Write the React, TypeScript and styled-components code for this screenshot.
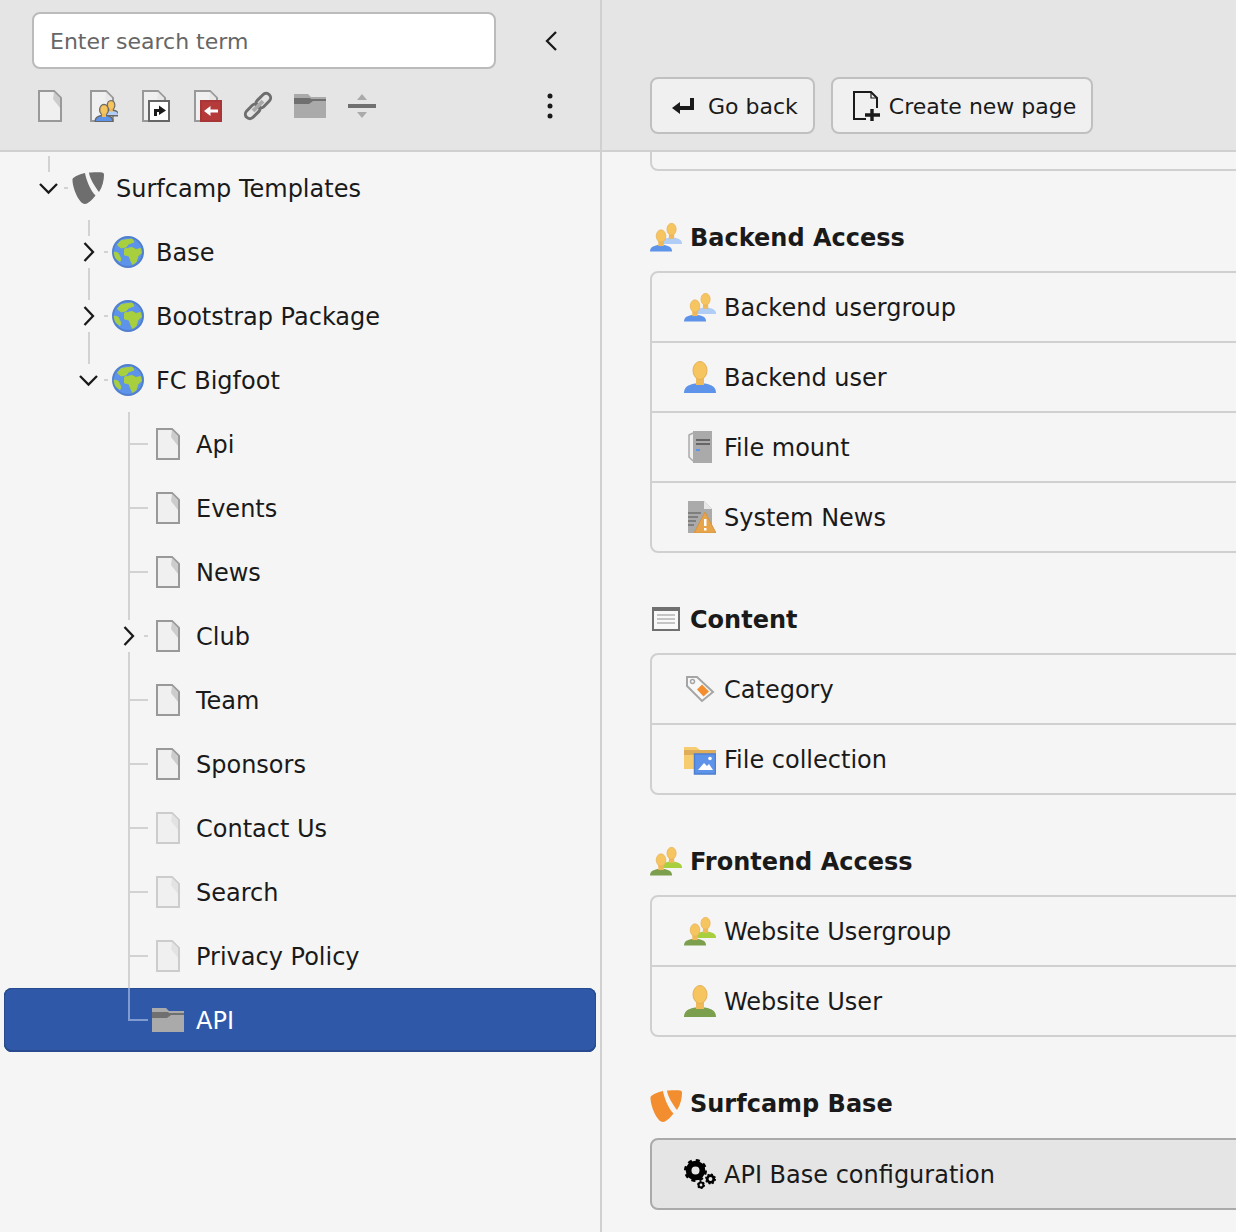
import React from 'react';
import styled, { createGlobalStyle } from 'styled-components';

const GlobalStyle = createGlobalStyle`
  html, body {
    margin: 0;
    padding: 0;
    height: 100%;
    overflow: hidden;
    background: #f5f5f5;
  }
  * { box-sizing: border-box; }
  body {
    font-family: "DejaVu Sans", Verdana, sans-serif;
    color: #1a1a1a;
  }
`;

const Glyph = styled.svg`
  display: block;
  flex: none;
  width: 32px;
  height: 32px;
`;

const Chevron = ({ dir }: { dir: 'left' | 'right' | 'down' }) => {
  const d = { left: 'M14 1 L5 10 L14 19', right: 'M5.500 1 L14 10 L5.500 19', down: 'M1 6 L9.500 14.500 L18 6' }[dir];
  return (
    <svg width="20" height="20" viewBox="0 0 20 20" fill="none" stroke="#1a1a1a" strokeWidth="2.300">
      <path d={d} />
    </svg>
  );
};

const Logo = ({ color }: { color: string }) => (
  <Glyph viewBox="0 0 32 32" fill={color}>
    <path d="M0.500 7 C2 4.500 8 2 13 1 C14 7 18 18 23.500 23.500 C20.500 27.500 16 32 13 32 C7 32 0 15 0.500 7Z" />
    <path d="M17 0.500 C22 0.500 27 0 30 0.500 C31.500 0.800 32 1.500 32 3 C32 8 30.500 15 27 20 C23 15 17.500 6 17 0.500Z" />
  </Glyph>
);

const Globe = () => (
  <Glyph viewBox="0 0 32 32">
    <circle cx="16" cy="16" r="15" fill="#5e93ea" stroke="#4f7fce" strokeWidth="2" />
    <path
      fill="#a8cf3d"
      stroke="#a8cf3d"
      strokeLinejoin="round"
      d="M9 4.500 L20 3 L22 6 L16.500 8 L14 11 L9 12 L5.500 9Z M12.500 13 L20 11.500 L24 13.500 L28.500 12.500 L29.500 17 L26 20 L24 26 L20.500 28.500 L18.500 24 L17 20 L12.500 19Z M2 16 L6 17 L9 23 L8 25.500 L3.500 22Z"
    />
  </Glyph>
);

type PersonProps = { body: string; x?: number; y?: number; scale?: number; outline?: boolean };

const Person = ({ body, x = 0, y = 0, scale = 1, outline }: PersonProps) => (
  <g transform={`translate(${x} ${y}) scale(${scale})`}>
    {outline && (
      <g fill="#666" stroke="#666" strokeWidth="6">
        <path d="M0 32 C0 26 4 24 11 22.500 L21 22.500 C28 24 32 26 32 32Z" />
        <ellipse cx="16" cy="9.500" rx="7" ry="9" />
      </g>
    )}
    <path fill={body} d="M0 32 C0 26 4 24 11 22.500 L21 22.500 C28 24 32 26 32 32Z" />
    <rect x="12" y="15" width="8" height="9" fill="#f0b95a" />
    <ellipse cx="16" cy="9.500" rx="7" ry="9" fill="#f6c55f" stroke="#e3b056" />
  </g>
);

const User = ({ body }: { body: string }) => (
  <Glyph viewBox="0 0 32 32">
    <Person body={body} />
  </Glyph>
);

const Users = ({ front, back }: { front: string; back: string }) => (
  <Glyph viewBox="0 0 32 32">
    <Person body={back} x={11} y={2} scale={0.66} />
    <Person body={front} x={0} y={8.500} scale={0.69} />
  </Glyph>
);

const PageOutline = ({ stroke = '#999', fold = '#ccc' }: { stroke?: string; fold?: string }) => (
  <>
    <path d="M5 1 H20 L27 8 V31 H5Z" fill="#f0f0f0" stroke={stroke} strokeWidth="2" />
    <path d="M20 2 L26 8 V18 L19 9Z" fill={fold} />
  </>
);

const Page = ({ hidden }: { hidden?: boolean }) => (
  <Glyph viewBox="0 0 32 32">
    <PageOutline stroke={hidden ? '#ccc' : '#999'} fold={hidden ? '#e3e3e3' : '#ccc'} />
  </Glyph>
);

const Folder = () => (
  <Glyph viewBox="0 0 32 32">
    <path d="M0 4 H14 L17 7 H32 V28 H0Z" fill="#aaa" />
    <path d="M0 8 H16 L17 9 H32 V11 H19 L15 14 H0Z" fill="#707070" />
  </Glyph>
);

const PageUsersIcon = () => (
  <Glyph viewBox="0 0 32 32">
    <PageOutline fold="#e8e8e8" />
    <Person body="#b0cdf5" x={18} y={11} scale={0.44} outline />
    <Person body="#5e93ea" x={10} y={15} scale={0.5} outline />
  </Glyph>
);

const PageShortcutIcon = () => (
  <Glyph viewBox="0 0 32 32">
    <PageOutline fold="#e8e8e8" />
    <rect x="11" y="11" width="20" height="20" fill="#fff" stroke="#666" strokeWidth="2" />
    <path d="M16 26 V19 H21 V15.500 L28 20.500 L21 25 V22 H19 V26Z" fill="#1a1a1a" />
  </Glyph>
);

const PageReturnIcon = () => (
  <Glyph viewBox="0 0 32 32">
    <PageOutline fold="#e8e8e8" />
    <rect x="11" y="11" width="20" height="20" fill="#b53b3b" stroke="#a83636" strokeWidth="2" />
    <path d="M14 21 L20.500 16 V19.500 L28 19.500 V22.500 H20.500 V26Z" fill="#fff" />
  </Glyph>
);

const ChainIcon = () => (
  <Glyph viewBox="0 0 32 32">
    <g transform="rotate(-45 16 16)">
      <g fill="none" stroke="#6e6e6e" strokeWidth="3">
        <rect x="0" y="11.500" width="17" height="9" rx="4.500" />
        <rect x="15" y="11.500" width="17" height="9" rx="4.500" />
      </g>
      <rect x="9" y="14" width="14" height="4" fill="#aaa" />
    </g>
  </Glyph>
);

const DividerIcon = () => (
  <Glyph viewBox="0 0 32 32">
    <rect x="2" y="14" width="28" height="4" fill="#707070" />
    <path d="M16 4 L21 10 H11Z M16 28 L21 22 H11Z" fill="#aaa" />
  </Glyph>
);

const KebabIcon = () => (
  <svg width="8" height="32" viewBox="0 0 8 32" fill="#1a1a1a">
    <circle cx="4" cy="6" r="2.500" />
    <circle cx="4" cy="16" r="2.500" />
    <circle cx="4" cy="26" r="2.500" />
  </svg>
);

const MountIcon = () => (
  <Glyph viewBox="0 0 32 32">
    <path d="M9 2 L5 4 V26 L9 30" fill="#eee" stroke="#aaa" strokeWidth="1.500" />
    <rect x="9" y="0" width="19" height="32" fill="#aaa" />
    <rect x="12" y="8" width="14" height="2" fill="#666" />
    <rect x="12" y="12" width="14" height="2" fill="#666" />
    <rect x="12" y="18" width="4" height="2" fill="#5e93ea" />
  </Glyph>
);

const NewsIcon = () => (
  <Glyph viewBox="0 0 32 32">
    <path d="M4 0 H20 L28 8 V32 H4Z" fill="#aaa" />
    <path d="M20 0 L28 8 H20Z" fill="#e8e8e8" />
    <path d="M4 12 H17 M4 16 H14 M4 20 H12 M4 24 H10" stroke="#707070" strokeWidth="1.500" />
    <path d="M21 11 L32 32 H10Z" fill="#e7a44b" stroke="#d49440" />
    <rect x="20" y="18" width="2.500" height="7" fill="#fff" />
    <rect x="20" y="27" width="2.500" height="2.500" fill="#fff" />
  </Glyph>
);

const ContentIcon = () => (
  <Glyph viewBox="0 0 32 32">
    <rect x="3" y="5" width="26" height="22" fill="#f8f8f8" stroke="#707070" strokeWidth="2" />
    <rect x="3" y="5" width="26" height="3" fill="#707070" />
    <path d="M7 12 H25 M7 16 H25 M7 20 H25" stroke="#c4c4c4" strokeWidth="2" />
  </Glyph>
);

const TagIcon = () => (
  <Glyph viewBox="0 0 32 32">
    <path d="M3 4 H13 L29 19 L18 28 L3 13Z" fill="#f8f8f8" stroke="#a5a5a5" strokeWidth="2" />
    <circle cx="8.500" cy="8.500" r="2" fill="none" stroke="#a5a5a5" strokeWidth="1.500" />
    <path d="M18 11.500 L25 18.500 L19.500 23.500 L13 16.500Z" fill="#f28e2f" />
  </Glyph>
);

const CollectionIcon = () => (
  <Glyph viewBox="0 0 32 32">
    <path d="M0 4 H12 L16 7 H32 V26 H0Z" fill="#f7cc70" />
    <path d="M0 7 H32 V12 H0Z" fill="#dfae5a" />
    <rect x="10.500" y="11" width="21" height="20" fill="#5e93ea" stroke="#4f7fce" strokeWidth="1.500" />
    <path d="M14 27 L20 20 L23 23 L25 21 L29 27Z" fill="#fff" />
    <circle cx="26" cy="15.500" r="1.800" fill="#fff" />
  </Glyph>
);

const Gear = ({ cx, cy, r, teeth }: { cx: number; cy: number; r: number; teeth: number }) => {
  const toothR = r * 0.86;
  const step = (2 * Math.PI * toothR) / teeth;
  return (
    <g fill="none" stroke="#000">
      <circle cx={cx} cy={cy} r={r * 0.6} strokeWidth={r * 0.5} />
      <circle cx={cx} cy={cy} r={toothR} strokeWidth={r * 0.28} strokeDasharray={`${step / 2} ${step / 2}`} />
    </g>
  );
};

const GearsIcon = () => (
  <Glyph viewBox="0 0 32 32">
    <Gear cx={11.500} cy={12.500} r={11.500} teeth={8} />
    <Gear cx={26.500} cy={21} r={5.500} teeth={8} />
    <Gear cx={17} cy={27} r={4} teeth={6} />
  </Glyph>
);

const ReturnIcon = () => (
  <svg width="22" height="18" viewBox="0 0 22 18" fill="#1a1a1a">
    <path d="M0 11 L8 5 V9 H18 V1 H22 V13 H8 V17Z" />
  </svg>
);

const NewPageIcon = () => (
  <svg width="30" height="32" viewBox="0 0 30 32" fill="none" stroke="#1a1a1a" strokeWidth="2">
    <path d="M14 29 H2 V2 H19 L25 8 V18" />
    <path d="M19 2 V8 H25" strokeWidth="1.200" />
    <path d="M20 19 V31 M13 25 H28" strokeWidth="3.400" />
  </svg>
);

const Layout = styled.div`
  display: flex;
  width: 1236px;
  height: 1232px;
  overflow: hidden;
`;

const Sidebar = styled.aside`
  flex: none;
  width: 602px;
  border-right: 2px solid #d0d0d0;
`;

const SidebarHeader = styled.header`
  height: 152px;
  padding: 12px 46px 0 32px;
  background: #e5e5e5;
  border-bottom: 2px solid #d0d0d0;
`;

const SearchRow = styled.div`
  display: flex;
  align-items: center;
  justify-content: space-between;
`;

const SearchField = styled.div`
  width: 464px;
  height: 57px;
  padding-left: 16px;
  font-size: 22px;
  line-height: 56px;
  color: #666;
  background: #fff;
  border: 2px solid #bbb;
  border-radius: 8px;
`;

const CollapseButton = styled.span`
  display: flex;
  margin-right: -8px;
`;

const Toolbar = styled.div`
  display: flex;
  align-items: center;
  justify-content: space-between;
  margin-top: 21px;
  padding-left: 2px;
`;

const ToolbarIcons = styled.div`
  display: flex;
  gap: 20px;
`;

const KebabButton = styled.span`
  display: flex;
`;

const Tree = styled.ul`
  margin: 0;
  padding: 4px 4px 0;
  list-style: none;
`;

const TreeRow = styled.li<{ $depth: number; $selected?: boolean }>`
  position: relative;
  display: flex;
  align-items: center;
  gap: 12px;
  height: 64px;
  padding-left: ${({ $depth }) => 68 + $depth * 40}px;
  font-size: 24px;
  color: ${({ $selected }) => ($selected ? '#fff' : '#1a1a1a')};
  background: ${({ $selected }) => ($selected ? '#2f59a8' : 'transparent')};
  border-radius: 8px;
  box-shadow: ${({ $selected }) => ($selected ? 'inset 0 0 0 1px #274b8e, inset 0 -1px 0 1px #274b8e' : 'none')};
`;

const Toggle = styled.span<{ $depth: number }>`
  position: absolute;
  top: 22px;
  left: ${({ $depth }) => 35 + $depth * 40}px;
  display: flex;
`;

const GuideLine = styled.i<{ $depth: number; $top: number; $height: number; $tint?: boolean }>`
  position: absolute;
  top: ${({ $top }) => $top}px;
  left: ${({ $depth }) => 44 + $depth * 40}px;
  width: 2px;
  height: ${({ $height }) => $height}px;
  background: ${({ $tint }) => ($tint ? '#7f9bcf' : '#d2d2d2')};
`;

const GuideStub = styled.i<{ $left: number; $width: number; $tint?: boolean }>`
  position: absolute;
  top: 31px;
  left: ${({ $left }) => $left}px;
  width: ${({ $width }) => $width}px;
  height: 2px;
  background: ${({ $tint }) => ($tint ? '#7f9bcf' : '#d2d2d2')};
`;

const NodeIcon = styled.span`
  display: flex;
`;

const Label = styled.span`
  padding-top: 2px;
`;

const Main = styled.main`
  flex: 1;
  min-width: 0;
`;

const MainHeader = styled.header`
  display: flex;
  align-items: flex-end;
  gap: 16px;
  height: 152px;
  padding: 0 0 16px 48px;
  background: #e5e5e5;
  border-bottom: 2px solid #d0d0d0;
`;

const Button = styled.span<{ $pad: string }>`
  display: flex;
  align-items: center;
  height: 57px;
  padding: ${({ $pad }) => $pad};
  font-size: 22px;
  color: #1a1a1a;
  background: #f0f0f0;
  border: 2px solid #c0c0c0;
  border-radius: 8px;
`;

const ButtonIcon = styled.span<{ $gap: number }>`
  display: flex;
  margin-right: ${({ $gap }) => $gap}px;
`;

const MainBody = styled.div`
  padding-left: 48px;
`;

const PrevListEnd = styled.div`
  width: 800px;
  height: 19px;
  margin-bottom: 50px;
  border: 2px solid #d0d0d0;
  border-top: 0;
  border-radius: 0 0 8px 8px;
`;

const Section = styled.section`
  margin-bottom: 50px;
`;

const SectionTitle = styled.h2<{ $after?: number }>`
  display: flex;
  align-items: center;
  gap: 8px;
  height: 32px;
  margin: 0 0 ${({ $after }) => $after ?? 18}px;
  font-size: 24px;
  font-weight: 700;
  color: #1a1a1a;
`;

const TitleLogo = styled.span`
  display: flex;
  transform: translateY(3px);
`;

const List = styled.div`
  width: 800px;
  overflow: hidden;
  background: #f5f5f5;
  border: 2px solid #d0d0d0;
  border-radius: 8px;
`;

const Item = styled.div`
  display: flex;
  align-items: center;
  gap: 8px;
  height: 68px;
  padding-left: 32px;
  font-size: 24px;
  & + & {
    height: 70px;
    border-top: 2px solid #d0d0d0;
  }
`;

const ActiveList = styled(List)`
  border-color: #aaa;
  background: #e5e5e5;
`;

type TreeNode = {
  label: string;
  depth: number;
  icon: React.ReactNode;
  toggle?: 'right' | 'down';
  lineHeight: number;
  lineBelow?: boolean;
  selected?: boolean;
};

const leaf = (label: string, hidden = false): TreeNode => ({
  label,
  depth: 2,
  icon: <Page hidden={hidden} />,
  lineHeight: 64,
});

const nodes: TreeNode[] = [
  { label: 'Surfcamp Templates', depth: 0, icon: <Logo color="#6e6e6e" />, toggle: 'down', lineHeight: 16 },
  { label: 'Base', depth: 1, icon: <Globe />, toggle: 'right', lineHeight: 16, lineBelow: true },
  { label: 'Bootstrap Package', depth: 1, icon: <Globe />, toggle: 'right', lineHeight: 16, lineBelow: true },
  { label: 'FC Bigfoot', depth: 1, icon: <Globe />, toggle: 'down', lineHeight: 16 },
  leaf('Api'),
  leaf('Events'),
  leaf('News'),
  { label: 'Club', depth: 2, icon: <Page />, toggle: 'right', lineHeight: 16, lineBelow: true },
  leaf('Team'),
  leaf('Sponsors'),
  leaf('Contact Us', true),
  leaf('Search', true),
  leaf('Privacy Policy', true),
  { label: 'API', depth: 2, icon: <Folder />, lineHeight: 33, selected: true },
];

const sections = [
  {
    title: 'Backend Access',
    icon: <Users front="#5e93ea" back="#b0cdf5" />,
    items: [
      { label: 'Backend usergroup', icon: <Users front="#5e93ea" back="#b0cdf5" /> },
      { label: 'Backend user', icon: <User body="#5e93ea" /> },
      { label: 'File mount', icon: <MountIcon /> },
      { label: 'System News', icon: <NewsIcon /> },
    ],
  },
  {
    title: 'Content',
    icon: <ContentIcon />,
    items: [
      { label: 'Category', icon: <TagIcon /> },
      { label: 'File collection', icon: <CollectionIcon /> },
    ],
  },
  {
    title: 'Frontend Access',
    icon: <Users front="#7b9f4c" back="#a8cf3d" />,
    items: [
      { label: 'Website Usergroup', icon: <Users front="#7b9f4c" back="#a8cf3d" /> },
      { label: 'Website User', icon: <User body="#7b9f4c" /> },
    ],
  },
];

const App = () => (
  <>
    <GlobalStyle />
    <Layout>
      <Sidebar>
        <SidebarHeader>
          <SearchRow>
            <SearchField>Enter search term</SearchField>
            <CollapseButton>
              <Chevron dir="left" />
            </CollapseButton>
          </SearchRow>
          <Toolbar>
            <ToolbarIcons>
              <Page />
              <PageUsersIcon />
              <PageShortcutIcon />
              <PageReturnIcon />
              <ChainIcon />
              <Folder />
              <DividerIcon />
            </ToolbarIcons>
            <KebabButton><KebabIcon /></KebabButton>
          </Toolbar>
        </SidebarHeader>
        <Tree>
          {nodes.map((node) => (
            <TreeRow key={node.label} $depth={node.depth} $selected={node.selected}>
              <GuideLine $depth={node.depth} $top={0} $height={node.lineHeight} $tint={node.selected} />
              {node.lineBelow && <GuideLine $depth={node.depth} $top={48} $height={16} />}
              {node.toggle ? (
                <>
                  <Toggle $depth={node.depth}>
                    <Chevron dir={node.toggle} />
                  </Toggle>
                  <GuideStub $left={node.depth * 40 + 60} $width={4} />
                </>
              ) : (
                <GuideStub $left={node.depth * 40 + 46} $width={18} $tint={node.selected} />
              )}
              <NodeIcon>{node.icon}</NodeIcon>
              <Label>{node.label}</Label>
            </TreeRow>
          ))}
        </Tree>
      </Sidebar>
      <Main>
        <MainHeader>
          <Button $pad="0 15px 0 20px">
            <ButtonIcon $gap={14}><ReturnIcon /></ButtonIcon>
            <Label>Go back</Label>
          </Button>
          <Button $pad="0 15px 0 19px">
            <ButtonIcon $gap={7}><NewPageIcon /></ButtonIcon>
            <Label>Create new page</Label>
          </Button>
        </MainHeader>
        <MainBody>
          <PrevListEnd />
          {sections.map((section) => (
            <Section key={section.title}>
              <SectionTitle>
                {section.icon}
                <Label>{section.title}</Label>
              </SectionTitle>
              <List>
                {section.items.map((item) => (
                  <Item key={item.label}>
                    {item.icon}
                    <Label>{item.label}</Label>
                  </Item>
                ))}
              </List>
            </Section>
          ))}
          <Section>
            <SectionTitle $after={19}>
              <TitleLogo><Logo color="#f28e2f" /></TitleLogo>
              <Label>Surfcamp Base</Label>
            </SectionTitle>
            <ActiveList>
              <Item>
                <GearsIcon />
                <Label>API Base configuration</Label>
              </Item>
            </ActiveList>
          </Section>
        </MainBody>
      </Main>
    </Layout>
  </>
);

export default App;
